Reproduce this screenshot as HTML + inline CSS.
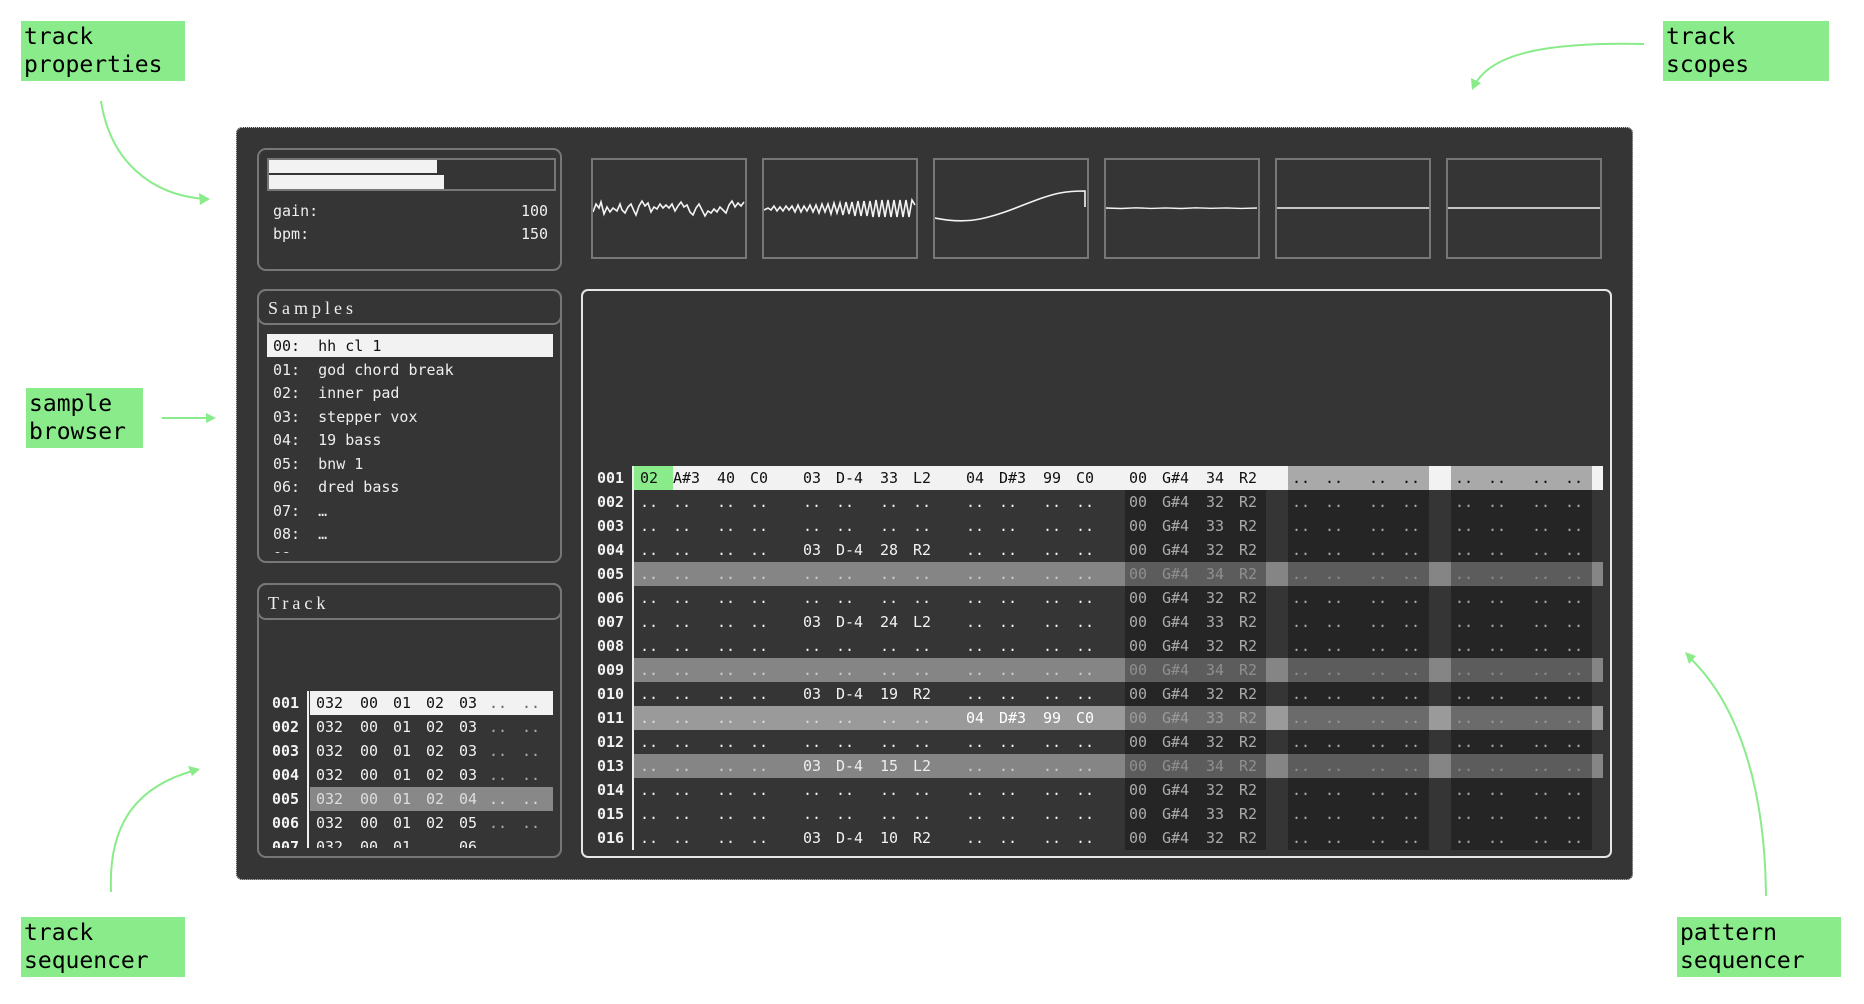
<!DOCTYPE html>
<html><head><meta charset="utf-8"><style>
*{margin:0;padding:0;box-sizing:border-box}
body{width:1864px;height:1004px;background:#fff;position:relative;overflow:hidden;font-family:"DejaVu Sans Mono","Liberation Mono",monospace}
.lbl{position:absolute;background:#8aeb8a;color:#000;font-size:23px;line-height:28px;padding:2px 3px;font-family:"DejaVu Sans Mono",monospace}
#main{position:absolute;left:236px;top:127px;width:1397px;height:753px;background:#353535;border:1px dotted #ccc;border-radius:6px}
.box{position:absolute;border:2px solid #777;border-radius:9px}
.hdr{position:absolute;left:0;top:0;right:0;border-bottom:2px solid #777;border-radius:9px;font-family:"Liberation Serif",serif;color:#eee;font-size:18px;letter-spacing:4px;padding-left:9px}
.t{position:absolute;color:#eee;font-size:15px;white-space:pre}
.scope{position:absolute;top:158px;width:156px;height:101px;border:2px solid #777}
.scope svg{position:absolute;left:0;top:0}
.prow{position:absolute;left:634px;width:969px;height:24px;font-size:15px;line-height:24px;color:#f2f2f2;padding-left:6px;white-space:nowrap}
.prow span{display:inline-block}
.prow span:nth-child(4n+1){width:33px}
.prow span:nth-child(4n+2){width:44px}
.prow span:nth-child(4n+3){width:33px}
.prow span:nth-child(4n){width:53px}
.prow span.g{width:39px;margin-left:-6px;padding-left:6px;background:#8aeb8a}
.num{position:absolute;left:597px;font-size:15px;line-height:24px;color:#f2f2f2;font-weight:bold}
.trow{position:absolute;left:310px;width:243px;height:24px;font-size:15px;line-height:24px;color:#f2f2f2;padding-left:6px;white-space:nowrap}
.trow span{display:inline-block}
.w44{width:44px}.w33{width:33px}.w30{width:30px}
.tnum{position:absolute;left:272px;font-size:15px;line-height:24px;color:#f2f2f2;font-weight:bold}
.ov{position:absolute;background:rgba(0,0,0,.3)}
</style></head><body>

<div class="lbl" style="left:21px;top:21px;width:164px;height:60px">track<br>properties</div>
<div class="lbl" style="left:1663px;top:21px;width:166px;height:60px">track<br>scopes</div>
<div class="lbl" style="left:26px;top:388px;width:117px;height:60px">sample<br>browser</div>
<div class="lbl" style="left:21px;top:917px;width:164px;height:60px">track<br>sequencer</div>
<div class="lbl" style="left:1677px;top:917px;width:164px;height:60px">pattern<br>sequencer</div>

<svg style="position:absolute;left:0;top:0" width="1864" height="1004">
<g fill="none" stroke="#8aeb8a" stroke-width="2">
<path d="M101 101 C110 160 150 195 205 199"/>
<path d="M1644 44 C1540 42 1490 55 1474 86"/>
<path d="M162 418 L212 418"/>
<path d="M111 892 C108 820 140 785 196 770"/>
<path d="M1766 896 C1765 780 1735 700 1688 656"/>
</g>
<g fill="#8aeb8a">
<path d="M210 199 L199 193 L200 205 Z"/>
<path d="M1472 90 L1471 78 L1481 83 Z"/>
<path d="M216 418 L206 413 L206 423 Z"/>
<path d="M200 769 L188 766 L192 776 Z"/>
<path d="M1685 652 L1689 664 L1696 656 Z"/>
</g>
</svg>

<div id="main"></div>

<div class="box" style="left:257px;top:148px;width:305px;height:123px"></div>
<div style="position:absolute;left:267px;top:158px;width:289px;height:33px;border:2px solid #777"></div>
<div style="position:absolute;left:269px;top:160px;width:168px;height:13px;background:#f2f2f2"></div>
<div style="position:absolute;left:269px;top:175px;width:175px;height:14px;background:#f2f2f2"></div>
<div class="t" style="left:273px;top:202px">gain:</div>
<div class="t" style="left:521px;top:202px">100</div>
<div class="t" style="left:273px;top:225px">bpm:</div>
<div class="t" style="left:521px;top:225px">150</div>

<div class="scope" style="left:591px"><svg width="152" height="97"><polyline fill="none" stroke="#f4f4f4" stroke-width="1.6" points="0,52 3,44 6,48 8,42 11,54 14,47 17,52 20,48 24,51 27,44 29,50 32,53 35,47 38,44 41,51 43,55 46,46 49,41 52,46 55,43 58,52 61,47 64,49 67,44 70,48 73,45 76,48 79,44 82,51 85,46 88,42 91,47 94,45 97,52 100,55 103,48 106,44 109,50 112,56 115,51 118,53 121,49 124,52 127,47 130,50 133,53 136,45 139,41 142,47 145,43 148,46 151,42"/></svg></div>
<div class="scope" style="left:762px"><svg width="152" height="97"><polyline fill="none" stroke="#f4f4f4" stroke-width="1.6" points="0,50 4,48 7,50 10,46 13,51 16,47 19,51 22,46 25,50 28,46 31,52 34,45 37,52 40,46 43,51 46,45 49,52 52,45 55,53 58,44 61,52 64,44 67,54 70,43 73,53 76,43 79,55 82,42 85,54 88,42 91,56 94,41 97,56 100,41 103,56 106,41 109,57 112,40 115,57 118,40 121,57 124,40 127,57 130,40 133,57 136,40 139,57 142,40 145,57 148,40 151,45"/></svg></div>
<div class="scope" style="left:933px"><svg width="152" height="97"><path fill="none" stroke="#f4f4f4" stroke-width="1.6" d="M0 58 C15 61 30 62 45 59 C75 53 100 38 125 33 C135 31 142 31 150 31 L150 47"/></svg></div>
<div class="scope" style="left:1104px"><svg width="152" height="97"><polyline fill="none" stroke="#f4f4f4" stroke-width="1.4" points="0,48 15,48.5 30,47.8 45,48.4 60,47.9 75,48.5 90,47.8 105,48.3 120,47.9 135,48.4 151,48"/></svg></div>
<div class="scope" style="left:1275px"><svg width="152" height="97"><line x1="0" y1="48" x2="152" y2="48" stroke="#f4f4f4" stroke-width="1.6"/></svg></div>
<div class="scope" style="left:1446px"><svg width="152" height="97"><line x1="0" y1="48" x2="152" y2="48" stroke="#f4f4f4" stroke-width="1.6"/></svg></div>

<div class="box" style="left:257px;top:289px;width:305px;height:274px"><div class="hdr" style="height:36px;line-height:34px;top:-2px;left:-2px;right:-2px;border:2px solid #777">Samples</div></div>
<div style="position:absolute;left:267px;top:334px;width:286px;height:23px;background:#f2f2f2"></div>
<div style="position:absolute;left:267px;top:334px;width:286px;height:219px;overflow:hidden">
<div class="t" style="left:6px;top:1px;line-height:23.5px;color:#eee"><span style="color:#111">00:  hh cl 1</span>
01:  god chord break
02:  inner pad
03:  stepper vox
04:  19 bass
05:  bnw 1
06:  dred bass
07:  …
08:  …
09:</div></div>

<div class="box" style="left:257px;top:583px;width:305px;height:275px"><div class="hdr" style="height:37px;line-height:36px;top:-2px;left:-2px;right:-2px;border:2px solid #777">Track</div></div>
<div style="position:absolute;left:307px;top:691px;width:2px;height:157px;background:#eee"></div>
<div style="position:absolute;left:0;top:0;width:1864px;height:848px;overflow:hidden">
<div class="tnum" style="top:691px">001</div><div class="trow" style="top:691px;background:#f2f2f2;color:#111"><span class="w44">032</span><span class="w33">00</span><span class="w33">01</span><span class="w33">02</span><span class="w30">03</span><span class="w33" style="color:#666">..</span><span style="color:#666">..</span></div>
<div class="tnum" style="top:715px">002</div><div class="trow" style="top:715px"><span class="w44">032</span><span class="w33">00</span><span class="w33">01</span><span class="w33">02</span><span class="w30">03</span><span class="w33" style="color:#aaa">..</span><span style="color:#aaa">..</span></div>
<div class="tnum" style="top:739px">003</div><div class="trow" style="top:739px"><span class="w44">032</span><span class="w33">00</span><span class="w33">01</span><span class="w33">02</span><span class="w30">03</span><span class="w33" style="color:#aaa">..</span><span style="color:#aaa">..</span></div>
<div class="tnum" style="top:763px">004</div><div class="trow" style="top:763px"><span class="w44">032</span><span class="w33">00</span><span class="w33">01</span><span class="w33">02</span><span class="w30">03</span><span class="w33" style="color:#aaa">..</span><span style="color:#aaa">..</span></div>
<div class="tnum" style="top:787px">005</div><div class="trow" style="top:787px;background:#888;color:#ddd"><span class="w44">032</span><span class="w33">00</span><span class="w33">01</span><span class="w33">02</span><span class="w30">04</span><span class="w33">..</span><span>..</span></div>
<div class="tnum" style="top:811px">006</div><div class="trow" style="top:811px"><span class="w44">032</span><span class="w33">00</span><span class="w33">01</span><span class="w33">02</span><span class="w30">05</span><span class="w33" style="color:#aaa">..</span><span style="color:#aaa">..</span></div>
<div class="tnum" style="top:835px">007</div><div class="trow" style="top:835px"><span class="w44">032</span><span class="w33">00</span><span class="w33">01</span><span class="w33"> </span><span class="w30">06</span></div>
</div>

<div style="position:absolute;left:581px;top:289px;width:1031px;height:569px;border:2px solid #e6e6e6;border-radius:7px"></div>
<div style="position:absolute;left:632px;top:466px;width:2px;height:384px;background:#eee"></div>

<div class="num" style="top:466px">001</div><div class="prow" style="top:466px;background:#f2f2f2;color:#111"><span class="g">02</span><span>A#3</span><span>40</span><span>C0</span><span>03</span><span>D-4</span><span>33</span><span>L2</span><span>04</span><span>D#3</span><span>99</span><span>C0</span><span>00</span><span>G#4</span><span>34</span><span>R2</span><span>..</span><span>..</span><span>..</span><span>..</span><span>..</span><span>..</span><span>..</span><span>..</span></div>
<div class="num" style="top:490px">002</div><div class="prow" style="top:490px"><span>..</span><span>..</span><span>..</span><span>..</span><span>..</span><span>..</span><span>..</span><span>..</span><span>..</span><span>..</span><span>..</span><span>..</span><span>00</span><span>G#4</span><span>32</span><span>R2</span><span>..</span><span>..</span><span>..</span><span>..</span><span>..</span><span>..</span><span>..</span><span>..</span></div>
<div class="num" style="top:514px">003</div><div class="prow" style="top:514px"><span>..</span><span>..</span><span>..</span><span>..</span><span>..</span><span>..</span><span>..</span><span>..</span><span>..</span><span>..</span><span>..</span><span>..</span><span>00</span><span>G#4</span><span>33</span><span>R2</span><span>..</span><span>..</span><span>..</span><span>..</span><span>..</span><span>..</span><span>..</span><span>..</span></div>
<div class="num" style="top:538px">004</div><div class="prow" style="top:538px"><span>..</span><span>..</span><span>..</span><span>..</span><span>03</span><span>D-4</span><span>28</span><span>R2</span><span>..</span><span>..</span><span>..</span><span>..</span><span>00</span><span>G#4</span><span>32</span><span>R2</span><span>..</span><span>..</span><span>..</span><span>..</span><span>..</span><span>..</span><span>..</span><span>..</span></div>
<div class="num" style="top:562px">005</div><div class="prow" style="top:562px;background:#858585;color:#ccc"><span>..</span><span>..</span><span>..</span><span>..</span><span>..</span><span>..</span><span>..</span><span>..</span><span>..</span><span>..</span><span>..</span><span>..</span><span>00</span><span>G#4</span><span>34</span><span>R2</span><span>..</span><span>..</span><span>..</span><span>..</span><span>..</span><span>..</span><span>..</span><span>..</span></div>
<div class="num" style="top:586px">006</div><div class="prow" style="top:586px"><span>..</span><span>..</span><span>..</span><span>..</span><span>..</span><span>..</span><span>..</span><span>..</span><span>..</span><span>..</span><span>..</span><span>..</span><span>00</span><span>G#4</span><span>32</span><span>R2</span><span>..</span><span>..</span><span>..</span><span>..</span><span>..</span><span>..</span><span>..</span><span>..</span></div>
<div class="num" style="top:610px">007</div><div class="prow" style="top:610px"><span>..</span><span>..</span><span>..</span><span>..</span><span>03</span><span>D-4</span><span>24</span><span>L2</span><span>..</span><span>..</span><span>..</span><span>..</span><span>00</span><span>G#4</span><span>33</span><span>R2</span><span>..</span><span>..</span><span>..</span><span>..</span><span>..</span><span>..</span><span>..</span><span>..</span></div>
<div class="num" style="top:634px">008</div><div class="prow" style="top:634px"><span>..</span><span>..</span><span>..</span><span>..</span><span>..</span><span>..</span><span>..</span><span>..</span><span>..</span><span>..</span><span>..</span><span>..</span><span>00</span><span>G#4</span><span>32</span><span>R2</span><span>..</span><span>..</span><span>..</span><span>..</span><span>..</span><span>..</span><span>..</span><span>..</span></div>
<div class="num" style="top:658px">009</div><div class="prow" style="top:658px;background:#858585;color:#ccc"><span>..</span><span>..</span><span>..</span><span>..</span><span>..</span><span>..</span><span>..</span><span>..</span><span>..</span><span>..</span><span>..</span><span>..</span><span>00</span><span>G#4</span><span>34</span><span>R2</span><span>..</span><span>..</span><span>..</span><span>..</span><span>..</span><span>..</span><span>..</span><span>..</span></div>
<div class="num" style="top:682px">010</div><div class="prow" style="top:682px"><span>..</span><span>..</span><span>..</span><span>..</span><span>03</span><span>D-4</span><span>19</span><span>R2</span><span>..</span><span>..</span><span>..</span><span>..</span><span>00</span><span>G#4</span><span>32</span><span>R2</span><span>..</span><span>..</span><span>..</span><span>..</span><span>..</span><span>..</span><span>..</span><span>..</span></div>
<div class="num" style="top:706px">011</div><div class="prow" style="top:706px;background:#9a9a9a;color:#ddd"><span>..</span><span>..</span><span>..</span><span>..</span><span>..</span><span>..</span><span>..</span><span>..</span><span style="color:#fff">04</span><span style="color:#fff">D#3</span><span style="color:#fff">99</span><span style="color:#fff">C0</span><span>00</span><span>G#4</span><span>33</span><span>R2</span><span>..</span><span>..</span><span>..</span><span>..</span><span>..</span><span>..</span><span>..</span><span>..</span></div>
<div class="num" style="top:730px">012</div><div class="prow" style="top:730px"><span>..</span><span>..</span><span>..</span><span>..</span><span>..</span><span>..</span><span>..</span><span>..</span><span>..</span><span>..</span><span>..</span><span>..</span><span>00</span><span>G#4</span><span>32</span><span>R2</span><span>..</span><span>..</span><span>..</span><span>..</span><span>..</span><span>..</span><span>..</span><span>..</span></div>
<div class="num" style="top:754px">013</div><div class="prow" style="top:754px;background:#858585;color:#ccc"><span>..</span><span>..</span><span>..</span><span>..</span><span style="color:#eee">03</span><span style="color:#eee">D-4</span><span style="color:#eee">15</span><span style="color:#eee">L2</span><span>..</span><span>..</span><span>..</span><span>..</span><span>00</span><span>G#4</span><span>34</span><span>R2</span><span>..</span><span>..</span><span>..</span><span>..</span><span>..</span><span>..</span><span>..</span><span>..</span></div>
<div class="num" style="top:778px">014</div><div class="prow" style="top:778px"><span>..</span><span>..</span><span>..</span><span>..</span><span>..</span><span>..</span><span>..</span><span>..</span><span>..</span><span>..</span><span>..</span><span>..</span><span>00</span><span>G#4</span><span>32</span><span>R2</span><span>..</span><span>..</span><span>..</span><span>..</span><span>..</span><span>..</span><span>..</span><span>..</span></div>
<div class="num" style="top:802px">015</div><div class="prow" style="top:802px"><span>..</span><span>..</span><span>..</span><span>..</span><span>..</span><span>..</span><span>..</span><span>..</span><span>..</span><span>..</span><span>..</span><span>..</span><span>00</span><span>G#4</span><span>33</span><span>R2</span><span>..</span><span>..</span><span>..</span><span>..</span><span>..</span><span>..</span><span>..</span><span>..</span></div>
<div class="num" style="top:826px">016</div><div class="prow" style="top:826px"><span>..</span><span>..</span><span>..</span><span>..</span><span>03</span><span>D-4</span><span>10</span><span>R2</span><span>..</span><span>..</span><span>..</span><span>..</span><span>00</span><span>G#4</span><span>32</span><span>R2</span><span>..</span><span>..</span><span>..</span><span>..</span><span>..</span><span>..</span><span>..</span><span>..</span></div>

<div class="ov" style="left:1125px;top:490px;width:141px;height:360px"></div>
<div class="ov" style="left:1288px;top:466px;width:141px;height:384px"></div>
<div class="ov" style="left:1451px;top:466px;width:141px;height:384px"></div>

</body></html>
